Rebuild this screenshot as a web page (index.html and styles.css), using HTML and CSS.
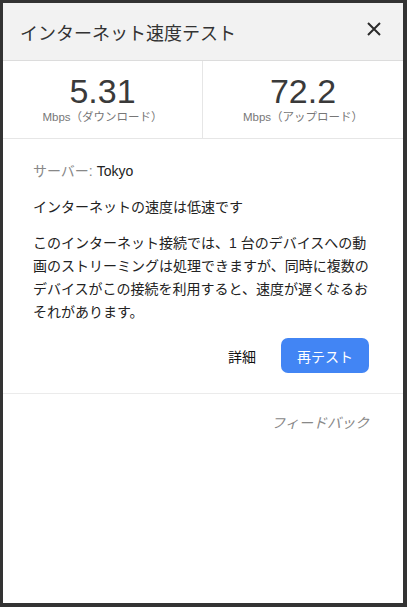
FILE: index.html
```html
<!DOCTYPE html>
<html lang="ja">
<head>
    <meta charset="UTF-8">
    <title>インターネット速度テスト</title>
    <link rel="stylesheet" href="styles.css">
</head>
<body>

    <div class="dialog">
        <!-- Header -->
        <div class="dialog-header">
            <h1 class="dialog-title">インターネット速度テスト</h1>
            <svg class="close-icon" width="16" height="16" viewBox="0 0 16 16">
                <path d="M2 2 L14 14 M14 2 L2 14" stroke="#2b2b2b" stroke-width="2" fill="none"/>
            </svg>
        </div>

        <!-- Speed results -->
        <div class="stats">
            <div class="stat">
                <div class="stat-value">5.31</div>
                <div class="stat-label">Mbps（ダウンロード）</div>
            </div>
            <div class="stat">
                <div class="stat-value">72.2</div>
                <div class="stat-label">Mbps（アップロード）</div>
            </div>
        </div>

        <!-- Details -->
        <div class="content">
            <p class="server"><span class="muted">サーバー:</span> Tokyo</p>
            <p class="summary">インターネットの速度は低速です</p>
            <p class="desc">このインターネット接続では、1 台のデバイスへの動画のストリーミングは処理できますが、同時に複数のデバイスがこの接続を利用すると、速度が遅くなるおそれがあります。</p>

            <div class="actions">
                <span class="link-btn">詳細</span>
                <button class="retest">再テスト</button>
            </div>
        </div>

        <div class="footer">
            <span class="feedback">フィードバック</span>
        </div>
    </div>

</body>
</html>
```

FILE: styles.css
```css
body {
    font-family: "Liberation Sans", "Noto Sans CJK JP", sans-serif;
    margin: 0;
    background-color: #333333;
    color: #222222;
}

.dialog {
    margin: 3px 4px 4px 3px;
    height: 600px;
    background-color: #ffffff;
    display: flex;
    flex-direction: column;
}

/* Header */
.dialog-header {
    height: 57px;
    background-color: #f2f2f2;
    border-bottom: 1px solid #dcdcdc;
    display: flex;
    align-items: center;
    justify-content: space-between;
    padding: 0 21px 0 17px;
}

.dialog-title {
    margin: 0;
    font-size: 18px;
    font-weight: normal;
    color: #333333;
    line-height: 24px;
    padding-top: 4px;
}

.close-icon {
    display: block;
    margin-top: -6px;
}

/* Stats */
.stats {
    display: grid;
    grid-template-columns: 1fr 1fr;
    border-bottom: 1px solid #e6e6e6;
    height: 77px;
}

.stat {
    display: flex;
    flex-direction: column;
    align-items: center;
    padding-top: 13px;
}

.stat:first-child {
    border-right: 1px solid #e6e6e6;
}

.stat-value {
    font-size: 34px;
    line-height: 34px;
    color: #3a3a3a;
}

.stat-label {
    font-size: 11.5px;
    line-height: 14px;
    color: #777777;
    margin-top: 2px;
}

/* Content */
.content {
    padding: 22px 34px 0 30px;
    border-bottom: 1px solid #ebebeb;
    font-size: 14px;
}

.content p {
    margin: 0;
}

.server {
    line-height: 20px;
}

.muted {
    color: #888888;
}

.summary {
    line-height: 20px;
    margin-top: 16px !important;
}

.desc {
    line-height: 23px;
    margin-top: 15px !important;
    color: #222222;
}

.actions {
    display: flex;
    justify-content: flex-end;
    align-items: center;
    gap: 25px;
    margin-top: 14px;
    padding-bottom: 20px;
}

.link-btn {
    font-size: 14px;
    color: #111111;
}

.retest {
    width: 88px;
    height: 35px;
    background-color: #4285f4;
    color: #ffffff;
    border: none;
    border-radius: 7px;
    font-family: inherit;
    font-size: 14px;
    cursor: pointer;
}

/* Footer */
.footer {
    display: flex;
    justify-content: flex-end;
    padding: 18px 34px 0 30px;
}

.feedback {
    font-size: 14px;
    font-style: italic;
    color: #888888;
}
```
